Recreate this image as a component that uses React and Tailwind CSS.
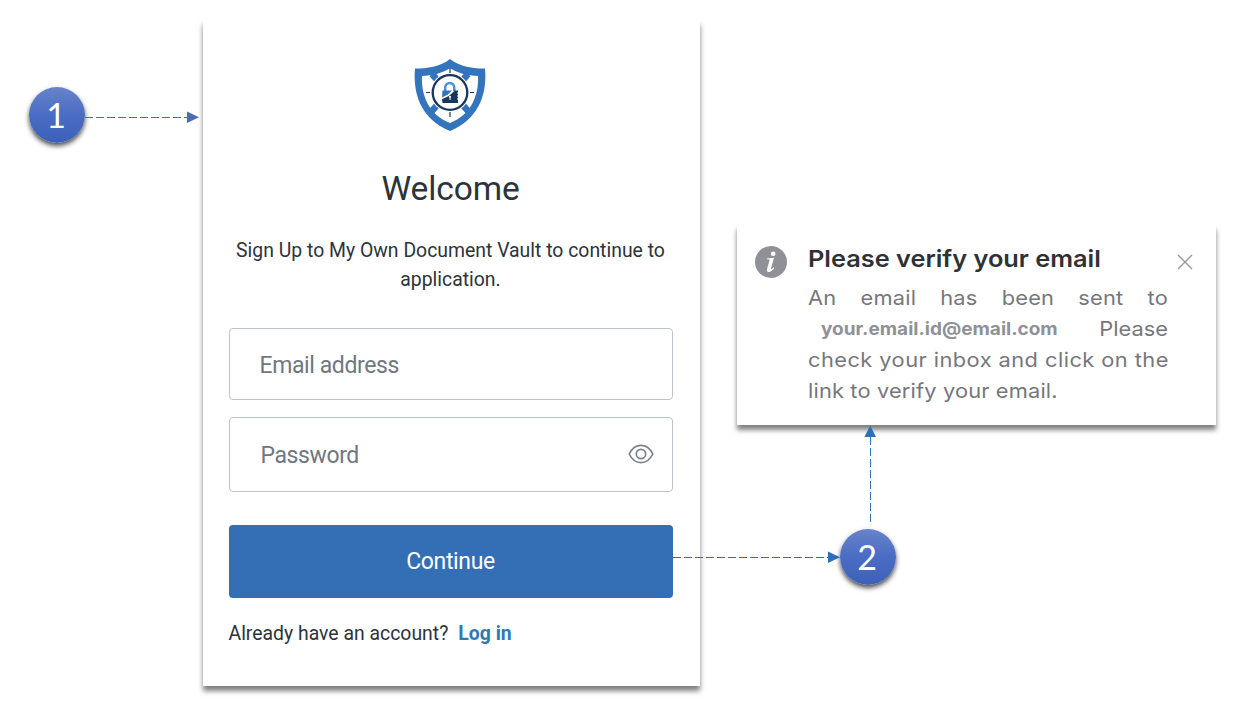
import React from "react";

function StepBadge({ children }) {
  return (
    <div className="relative flex h-14 w-14 shrink-0 items-center justify-center rounded-full bg-linear-to-b from-[#6883c9] via-[#4a6cc4] to-[#3c60b8] pr-0.5 font-['Lato','Liberation_Sans',sans-serif] text-[34px] leading-none text-white shadow-[0_3px_5px_rgba(0,0,0,0.7)]">
      {children}
    </div>
  );
}

function ArrowRight({ width, color }) {
  return (
    <svg width={width} height="12" viewBox={`0 0 ${width} 12`} className="relative block shrink-0" fill="none">
      <path d={`M0 6.5H${width - 11}`} stroke={color} strokeWidth="1" strokeDasharray="8 3" />
      <path d={`M${width - 12} 0.5V12L${width} 6.3Z`} fill={color} />
    </svg>
  );
}

function ArrowUp() {
  return (
    <svg width="12" height="97" viewBox="0 0 12 97" className="relative block shrink-0" fill="none">
      <path d="M6.5 97V12" stroke="#2e74b5" strokeDasharray="8 3" />
      <path d="M0.4 12H12L6.2 0.5Z" fill="#2e70b7" />
    </svg>
  );
}

function ShieldLogo() {
  return (
    <svg width="72" height="74" viewBox="0 0 72 74" className="block" fill="none">
      <path d="M36 1C46 9 59 10.5 71 10.5C73 33 67 60 36 73C5 60-1 33 1 10.5C13 10.5 26 9 36 1Z" fill="#3474bd" />
      <path d="M36 10C44 15.500 54 17.500 64 18C65 37 57 57 36 65C15 57 7 37 8 18C18 17.500 28 15.500 36 10Z" fill="#fff" />
      <path d="M18 16L25 24M54 16L47 24M17 54L26 44M55 54L46 44" stroke="#3474bd" strokeWidth="6.500" />
      <circle cx="36" cy="34.500" r="19.500" fill="#fff" />
      <circle cx="36" cy="34.500" r="17.300" fill="#fff" stroke="#17375f" strokeWidth="2.300" />
      <path d="M36 10V15M36 54V59M12 34.500H16M56 34.500H60" stroke="#17375f" strokeWidth="1.200" />
      <path d="M31.200 33V29.800C31.200 23.300 40.300 23.300 40.300 29.800V33" stroke="#4a90d6" strokeWidth="2.500" />
      <path d="M28.500 32.500H38L34 36.500L28 39.500Z" fill="#3474bd" />
      <path d="M28 41C34.500 39 38 35.500 40.500 32.500H44V45H28.500Z" fill="#17375f" />
      <circle cx="36" cy="38.800" r="1.100" fill="#fff" />
      <path d="M35.500 39H36.500V42H35.500Z" fill="#fff" />
      <path d="M43 34.500H45V35.500H43ZM43 37.500H45V38.500H43ZM43 40.500H45V41.500H43Z" fill="#fff" />
    </svg>
  );
}

function EyeIcon() {
  return (
    <svg width="26" height="20" viewBox="0 0 26 20" className="-mt-0.5" fill="none" stroke="#7b838d" strokeWidth="1.700">
      <path d="M1.200 10C4 4.200 8.200 1.300 13 1.300S22 4.200 24.800 10C22 15.800 17.800 18.700 13 18.700S4 15.800 1.200 10Z" />
      <circle cx="13" cy="10" r="4.700" />
    </svg>
  );
}

function SignUpCard() {
  return (
    <main className="mt-[20px] flex h-[666px] w-[497px] shrink-0 flex-col items-center bg-white pr-[27px] pl-[25px] font-['Roboto',sans-serif] text-[#2d333a] shadow-[0_5px_5px_rgba(0,0,0,0.5)]">
      <div className="mt-[38px] -ml-0.5">
        <ShieldLogo />
      </div>
      <h1 className="mt-[36px] text-[33.5px] leading-[42px] tracking-[-0.1px] whitespace-nowrap">Welcome</h1>
      <p className="mt-[26px] text-center text-[19.4px] leading-[29px] whitespace-nowrap">
        Sign Up to My Own Document Vault to continue to
        <br />
        application.
      </p>
      <div className="mt-[34px] flex h-[72px] w-[444px] shrink-0 items-center rounded-[4px] border border-[#bec4cc] px-[30px] pt-1 text-[23px] tracking-[-0.4px] text-[#6f7780]">
        <span>Email address</span>
      </div>
      <div className="mt-[17px] flex h-[75px] w-[444px] shrink-0 items-center justify-between rounded-[4px] border border-[#bec4cc] pr-[18px] pl-[31px] text-[23px] tracking-[-0.4px] text-[#6f7780]">
        <span className="pt-1">Password</span>
        <EyeIcon />
      </div>
      <button className="mt-[33px] h-[73px] w-[444px] shrink-0 rounded-[4px] bg-[#346fb5] pt-px text-[23px] tracking-[-0.35px] text-white">
        <span>Continue</span>
      </button>
      <div className="mt-[22px] flex w-[444px] gap-[10px] text-[19.4px] leading-[28px] whitespace-nowrap">
        <span>Already have an account?</span>
        <a className="font-bold text-[#2e7ab0]">Log in</a>
      </div>
    </main>
  );
}

function VerifyToast() {
  return (
    <aside className="ml-[37px] flex h-[201px] w-[479px] shrink-0 items-start rounded-t-[3px] bg-white pt-[19px] pl-[18px] font-['Inter',sans-serif] shadow-[0_5px_5px_rgba(0,0,0,0.5)]">
      <div className="mt-[3px] flex h-8 w-8 shrink-0 items-center justify-center rounded-full bg-[#909197]">
        <svg width="12" height="22" viewBox="0 0 12 22" fill="#fff">
          <circle cx="8.200" cy="2.800" r="2.300" />
          <path d="M2 7.500L9 6.800L6 17.500C5.700 18.700 7 18.300 8.800 16.300L9.300 17C7.500 19.500 5.700 21 3.800 21C2 21 1.600 19.600 2.100 17.800L4.500 9.500C4.700 8.800 4.300 8.300 1.800 8.300Z" />
        </svg>
      </div>
      <div className="ml-[21px] w-[360px] shrink-0">
        <h2 className="w-[271px] origin-left scale-x-[1.083] pt-px text-[23.4px] leading-[30px] font-semibold whitespace-nowrap text-[#303136]">
          Please verify your email
        </h2>
        <div className="mt-[8px] w-[333.3px] origin-left scale-x-[1.08] text-[20.2px] leading-[31px] whitespace-nowrap text-[#76777b]">
          <p className="flex justify-between tracking-[0.2px]">
            <span>An</span>
            <span>email</span>
            <span>has</span>
            <span>been</span>
            <span>sent</span>
            <span>to</span>
          </p>
          <p className="flex justify-between pl-3">
            <b className="text-[17.6px] font-bold text-[#8f9198]">your.email.id@email.com</b>
            <span>Please</span>
          </p>
          <p className="tracking-[0.42px]">check your inbox and click on the</p>
          <p className="tracking-[0.15px]">link to verify your email.</p>
        </div>
      </div>
      <svg width="16" height="16" viewBox="0 0 16 16" className="mt-[11px] ml-[9px]" stroke="#96979c" strokeWidth="1.400">
        <path d="M1 1L15 15M15 1L1 15" />
      </svg>
    </aside>
  );
}

export default function App() {
  return (
    <div className="flex h-[710px] w-[1256px] items-start overflow-hidden bg-white">
      <div className="mt-[87px] ml-[29px] flex w-[174px] shrink-0 items-start">
        <StepBadge>1</StepBadge>
        <div className="mt-[24px]">
          <ArrowRight width={114} color="#4a6cb8" />
        </div>
      </div>
      <SignUpCard />
      <div className="mt-[224px] flex shrink-0 flex-col items-start">
        <VerifyToast />
        <div className="ml-[164px] h-[104px]">
          <ArrowUp />
        </div>
        <div className="-ml-[27px] flex items-start">
          <div className="mt-[22px]">
            <ArrowRight width={167} color="#2e70b7" />
          </div>
          <StepBadge>2</StepBadge>
        </div>
      </div>
    </div>
  );
}
